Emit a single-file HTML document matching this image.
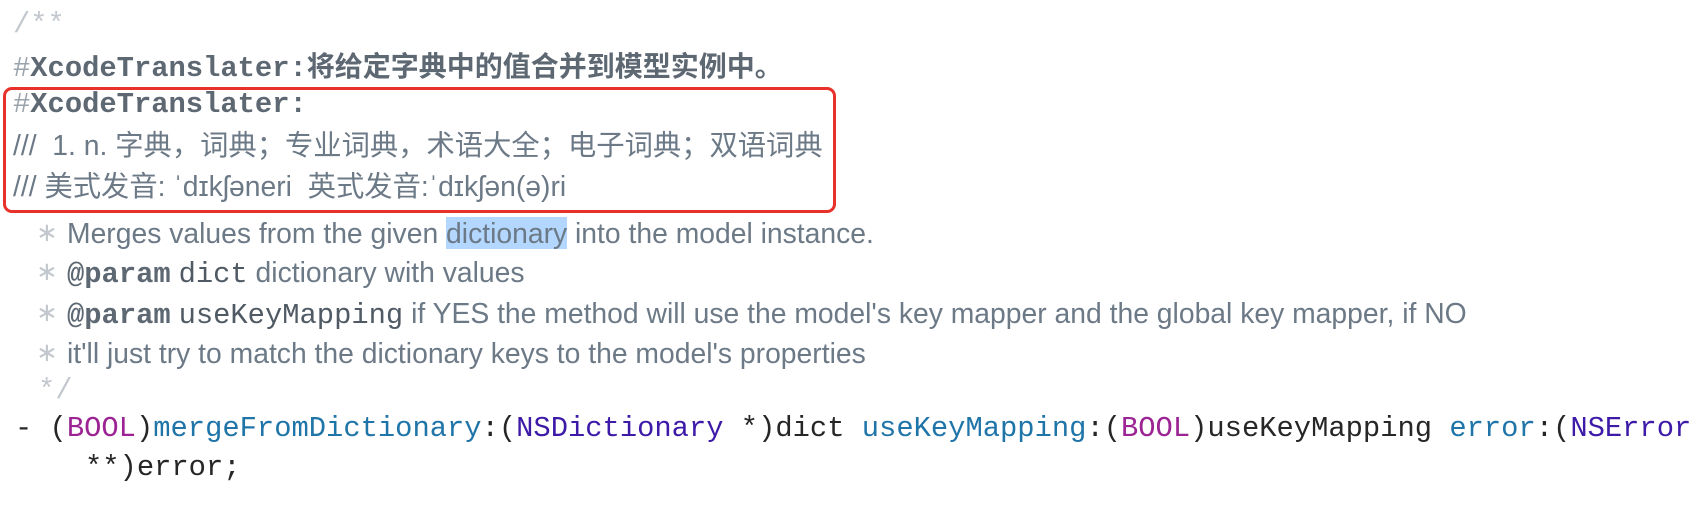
<!DOCTYPE html>
<html><head><meta charset="utf-8"><style>
body{margin:0;width:1700px;height:506px;background:#fff;overflow:hidden;position:relative}
.l{position:absolute;white-space:pre;line-height:40px;height:40px}
.m{font-family:"Liberation Mono","Noto Sans CJK SC",monospace;font-size:28.8px}
.s{font-family:"Liberation Sans","Noto Sans CJK SC",sans-serif;font-size:28.3px;color:#6c7986}
.lg{color:#c3c8ce}
.b{font-weight:bold;color:#5d6873}
.k{color:#9b2393}
.f{color:#1f74a8}
.t{color:#3d1aa8}
.c{color:#262626}
.hl{background:#b4d7ff}
#box{position:absolute;left:3px;top:87px;width:827px;height:120px;border:3px solid #e8312a;border-radius:9px}
.ast{position:absolute;left:36px;font-family:"DejaVu Sans",sans-serif;font-size:26px;color:#c3c8ce;line-height:40px}
</style></head><body>
<div class="l m lg" style="left:13px;top:5px">/**</div>
<div class="l m" style="left:13px;top:45px"><span style="color:#9aa3ab">#</span><span class="b">XcodeTranslater:</span><span class="b" style="font-family:'Noto Sans CJK SC',sans-serif;font-size:28px">将给定字典中的值合并到模型实例中。</span></div>
<div id="box"></div>
<div class="l m" style="left:13px;top:85px"><span style="color:#9aa3ab">#</span><span class="b">XcodeTranslater:</span></div>
<div class="l s" style="left:13px;top:125px">///&nbsp; 1. n. 字典，词典；专业词典，术语大全；电子词典；双语词典</div>
<div class="l s" style="left:13px;top:166px">/// 美式发音: ˈdɪkʃəneri&nbsp; 英式发音:ˈdɪkʃən(ə)ri</div>
<div class="ast" style="top:213px">∗</div>
<div class="l s" style="left:67px;top:213px">Merges values from the given <span class="hl">dictionary</span> into the model instance.</div>
<div class="ast" style="top:252px">∗</div>
<div class="l s" style="left:67px;top:252px"><span class="m b">@param</span> <span class="m" style="color:#505a64">dict</span> dictionary with values</div>
<div class="ast" style="top:293px">∗</div>
<div class="l s" style="left:67px;top:293px"><span class="m b">@param</span> <span class="m" style="color:#505a64">useKeyMapping</span> if YES the method will use the model's key mapper and the global key mapper, if NO</div>
<div class="ast" style="top:333px">∗</div>
<div class="l s" style="left:67px;top:333px">it'll just try to match the dictionary keys to the model's properties</div>
<div class="l m lg" style="left:38px;top:371px">*/</div>
<div class="l m c" style="left:15px;top:409px">- (<span class="k">BOOL</span>)<span class="f">mergeFromDictionary</span>:(<span class="t">NSDictionary</span> *)dict <span class="f">useKeyMapping</span>:(<span class="k">BOOL</span>)useKeyMapping <span class="f">error</span>:(<span class="t">NSError</span></div>
<div class="l m c" style="left:85px;top:448px">**)error;</div>
</body></html>
